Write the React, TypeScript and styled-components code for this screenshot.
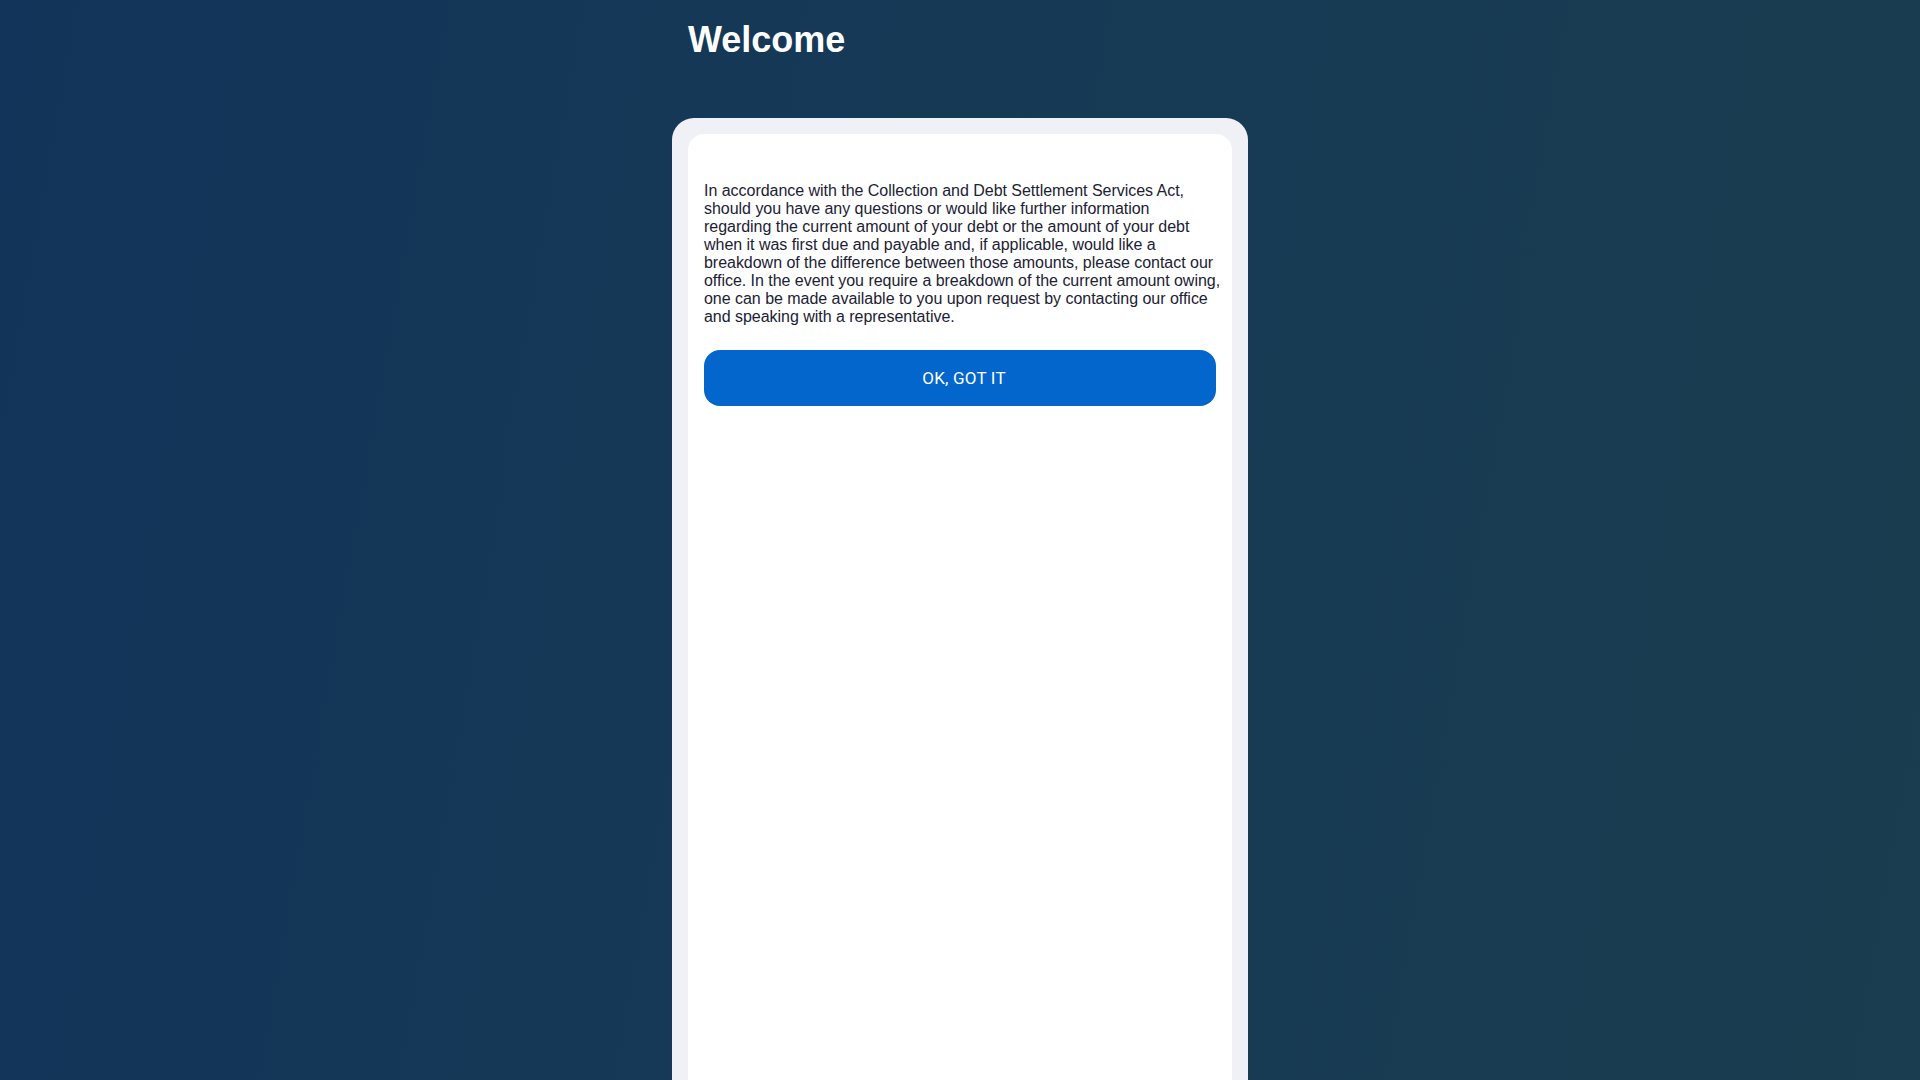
import React from 'react';
import styled, { createGlobalStyle } from 'styled-components';

const GlobalStyle = createGlobalStyle`
  html, body {
    margin: 0;
    padding: 0;
    height: 100%;
    overflow: hidden;
  }
  body {
    font-family: 'Liberation Sans', Arial, sans-serif;
  }
`;

const Page = styled.div`
  min-height: 100vh;
  background: linear-gradient(100deg, #12345a 0%, #163a55 50%, #1a3d4f 100%);
  display: flex;
  justify-content: center;
`;

const Column = styled.div`
  width: 576px;
  display: flex;
  flex-direction: column;
`;

const Title = styled.h1`
  margin: 0;
  padding: 19px 16px 0;
  height: 118px;
  box-sizing: border-box;
  font-family: 'Liberation Sans', Arial, sans-serif;
  font-size: 36px;
  font-weight: 700;
  color: #ffffff;
`;

const Shell = styled.div`
  background: #f0f1f6;
  border-radius: 22px 22px 0 0;
  padding: 16px 16px 0;
`;

const Sheet = styled.div`
  background: #ffffff;
  border-radius: 16px 16px 0 0;
  padding: 48px 8px 0 16px;
  min-height: 1000px;
`;

const Notice = styled.p`
  margin: 0 0 24px;
  font-size: 16px;
  line-height: 18px;
  letter-spacing: -0.03px;
  white-space: nowrap;
  color: #1c2234;
`;

const PrimaryButton = styled.button`
  display: block;
  width: 512px;
  height: 56px;
  padding: 0 0 0 8px;
  border: none;
  border-radius: 16px;
  background: #0266cc;
  color: #ffffff;
  font-family: Roboto, 'Liberation Sans', sans-serif;
  font-size: 17px;
  font-weight: 400;
  letter-spacing: 0.2px;
  cursor: pointer;
`;

const noticeLines = [
  'In accordance with the Collection and Debt Settlement Services Act,',
  'should you have any questions or would like further information',
  'regarding the current amount of your debt or the amount of your debt',
  'when it was first due and payable and, if applicable, would like a',
  'breakdown of the difference between those amounts, please contact our',
  'office. In the event you require a breakdown of the current amount owing,',
  'one can be made available to you upon request by contacting our office',
  'and speaking with a representative.',
];

const App: React.FC = () => (
  <>
    <GlobalStyle />
    <Page>
      <Column>
        <Title>Welcome</Title>
        <Shell>
          <Sheet>
            <Notice>
              {noticeLines.map((line, i) => (
                <React.Fragment key={i}>
                  {line}
                  {i < noticeLines.length - 1 && <br />}
                </React.Fragment>
              ))}
            </Notice>
            <PrimaryButton>OK, GOT IT</PrimaryButton>
          </Sheet>
        </Shell>
      </Column>
    </Page>
  </>
);

export default App;
